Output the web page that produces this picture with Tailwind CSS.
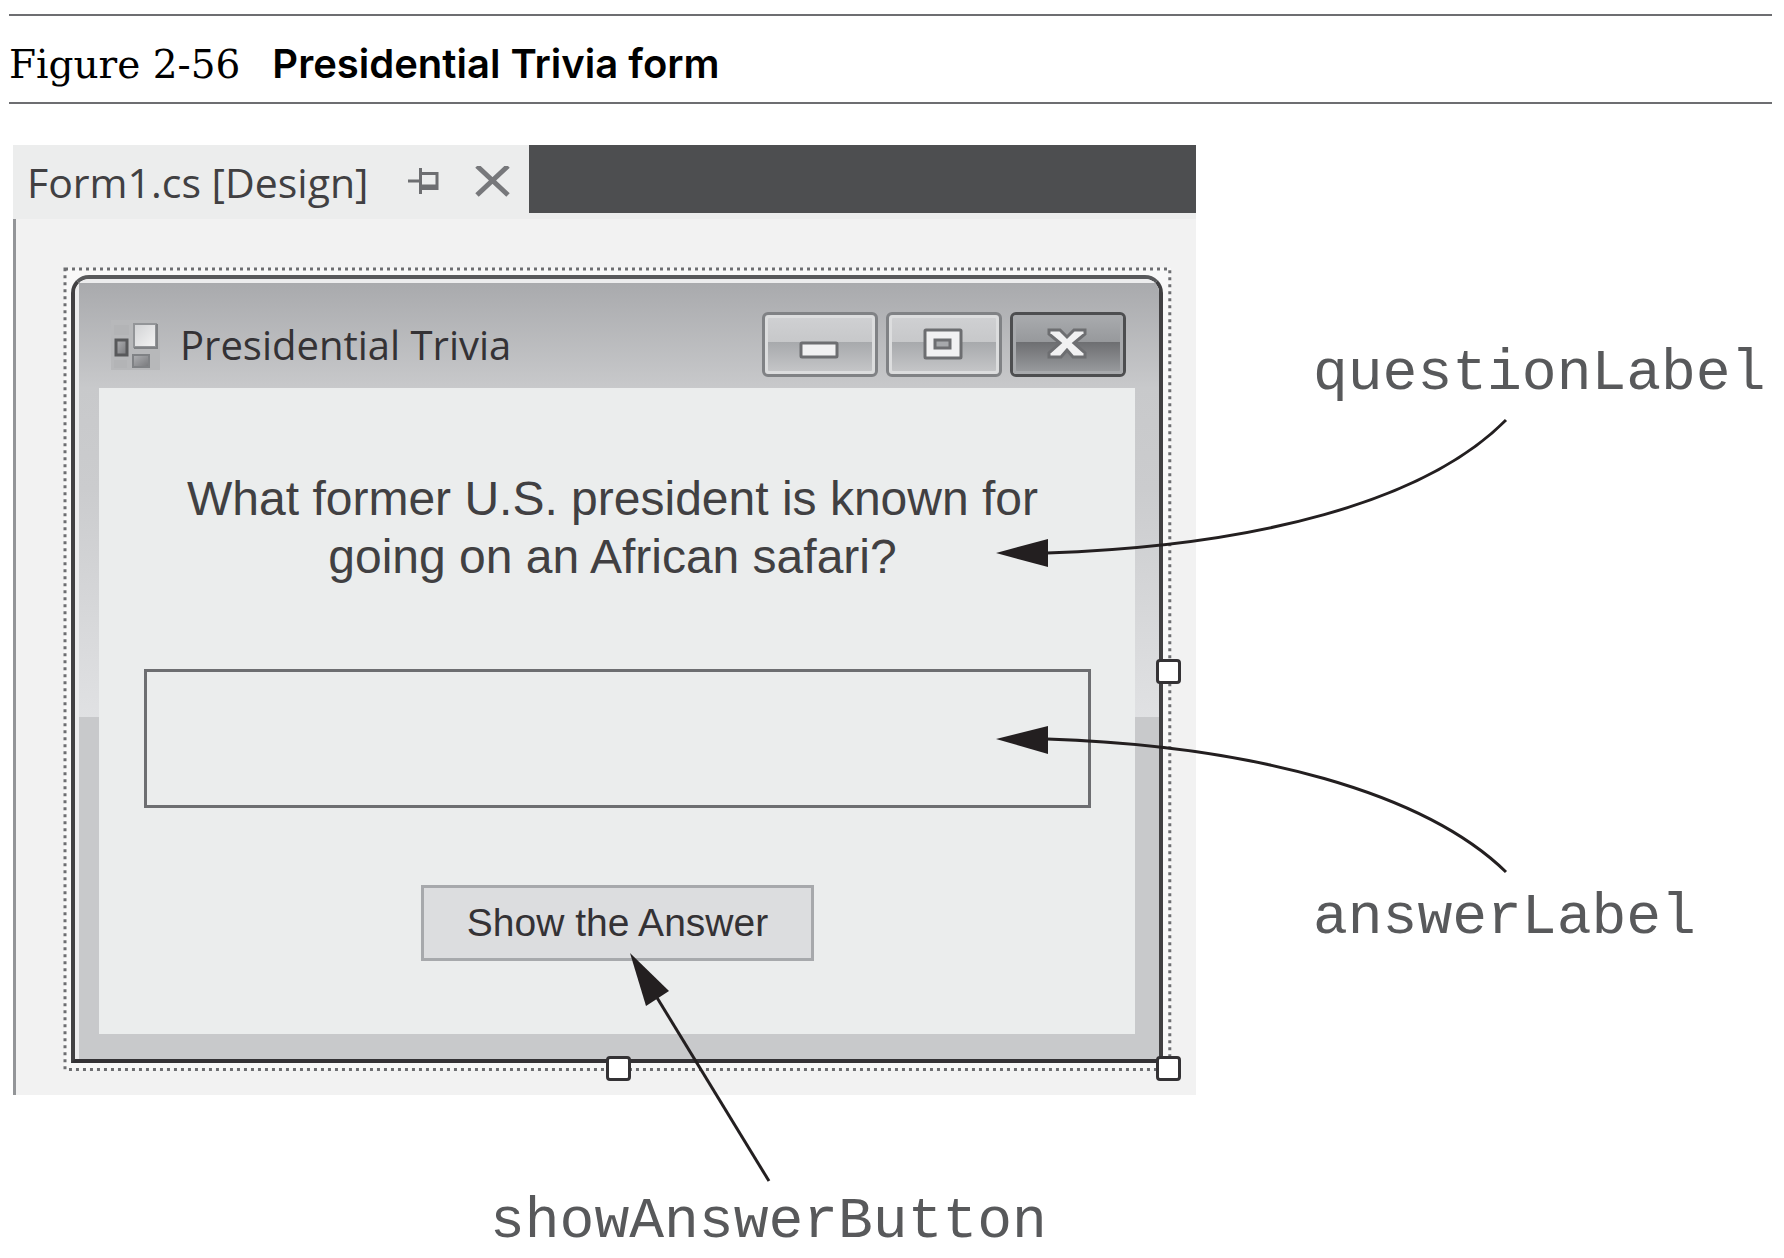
<!DOCTYPE html>
<html lang="en">
<head>
<meta charset="utf-8">
<title>Figure 2-56 Presidential Trivia form</title>
<script src="https://cdn.jsdelivr.net/npm/@tailwindcss/browser@4"></script>
</head>
<body class="bg-white text-[#231f20]">
<main class="pt-3.5 pl-[9px] pr-3">
  <header class="flex items-baseline gap-8 border-y-2 border-[#6d6e71] pt-5 pb-[9px] text-black">
    <span class="font-['DejaVu_Serif',serif] text-[39px] leading-14">Figure 2-56</span>
    <h1 class="font-[Inter,sans-serif] text-[40px] leading-14 font-semibold">Presidential Trivia form</h1>
  </header>

  <section class="relative mt-[41px] ml-1 grid grid-cols-[1183fr_576fr]">
    <!-- Designer pane -->
    <div class="bg-[#f2f2f2]">
      <div class="flex bg-[#eceded]">
        <div class="flex h-[74px] w-[516px] items-center pl-3.5">
          <span class="font-['Open_Sans',sans-serif] text-[41px] leading-14 text-[#414042] whitespace-nowrap">Form1.cs [Design]</span>
          <button type="button" aria-label="Pin tab" class="ml-10">
            <svg width="31" height="28" viewBox="0 0 31 28" fill="none" stroke="#6d6e71" stroke-width="3"><path d="M0 13H12M12.500 0V26M12 5.500H29V20.500H12M12 18H29"/></svg>
          </button>
          <button type="button" aria-label="Close tab" class="ml-9">
            <svg width="35" height="32" viewBox="0 0 35 32" fill="none" stroke="#77787b" stroke-width="5"><path d="M2 0L33 29M33 0L2 29"/></svg>
          </button>
        </div>
        <div class="h-[68px] grow bg-[#4d4e50]"></div>
      </div>

      <div class="border-l-3 border-[#939598] pt-[49px] pr-[25px] pb-[25px] pl-12">
        <!-- Selected form with dotted outline and sizing handles -->
        <div class="relative bg-[#f8f8f8] p-[7px] pr-2">
          <svg class="absolute inset-0 size-full overflow-visible" fill="none" stroke="#6d6e71" stroke-width="3" stroke-dasharray="3 4" aria-hidden="true">
            <rect x="1" y="1" width="99.800%" height="99.800%"/>
          </svg>
          <div class="relative overflow-hidden rounded-t-[18px] border-4 border-t-[#58595b] border-x-[#414042] border-b-[#343235]">
            <div class="rounded-tl-[14px] border-t-4 border-l-4 border-[#ececed] bg-[#c8c9cb]">
              <div class="flex h-[105px] items-center bg-linear-to-b from-[#a9aaad] to-[#c8c9cb] pt-[18px] pr-[33px] pl-8">
                <svg width="49" height="50" viewBox="0 0 49 50" aria-hidden="true">
                  <defs>
                    <linearGradient id="light" x2="1" y2="1"><stop stop-color="#d1d2d4"/><stop offset="1" stop-color="#f4f4f4"/></linearGradient>
                    <linearGradient id="dark" x2="1" y2="1"><stop stop-color="#b0b1b4"/><stop offset="1" stop-color="#77787b"/></linearGradient>
                  </defs>
                  <rect width="49" height="50" fill="#b7b8ba"/>
                  <path d="M3 5H18V15H3ZM3 40H16V48H3Z" fill="#b3b4b6"/>
                  <rect x="23" y="4" width="22" height="23" fill="url(#light)" stroke="#939598" stroke-width="2"/>
                  <path d="M23 28H46V4" fill="none" stroke="#808285" stroke-width="2"/>
                  <rect x="5" y="20" width="11" height="15" fill="url(#dark)" stroke="#58595b" stroke-width="3"/>
                  <rect x="22" y="35" width="16" height="12" fill="url(#dark)" stroke="#808285" stroke-width="2"/>
                </svg>
                <span class="ml-5 grow font-['Open_Sans',sans-serif] text-[40px] leading-14 text-[#343235] whitespace-nowrap">Presidential Trivia</span>
                <div class="flex gap-2">
                  <button type="button" aria-label="Minimize" class="flex h-[65px] w-[116px] items-center justify-center rounded-md border-3 border-[#808285]">
                    <span class="flex size-full items-center justify-center rounded-sm border-3 border-[#dcddde] bg-[linear-gradient(to_bottom,#cfd0d2_0%,#c7c8ca_45%,#a7a9ac_45%,#c4c5c7_100%)]">
                      <svg width="42" height="34" viewBox="0 0 42 34"><rect x="2" y="15" width="36" height="14" rx="1" fill="#f1f1f2" stroke="#6d6e71" stroke-width="3"/></svg>
                    </span>
                  </button>
                  <button type="button" aria-label="Maximize" class="flex h-[65px] w-[116px] items-center justify-center rounded-md border-3 border-[#808285]">
                    <span class="flex size-full items-center justify-center rounded-sm border-3 border-[#dcddde] bg-[linear-gradient(to_bottom,#cfd0d2_0%,#c7c8ca_45%,#a7a9ac_45%,#c4c5c7_100%)]">
                      <svg width="42" height="34" viewBox="0 0 42 34" stroke="#6d6e71" stroke-width="3"><rect x="2" y="2" width="36" height="28" rx="1" fill="#f1f1f2"/><rect x="12" y="12" width="15" height="8" fill="#a7a9ac"/></svg>
                    </span>
                  </button>
                  <button type="button" aria-label="Close" class="flex h-[65px] w-[116px] items-center justify-center rounded-md border-3 border-[#4d4e50]">
                    <span class="flex size-full items-center justify-center rounded-sm border-3 border-[#a7a9ac] bg-[linear-gradient(to_bottom,#a7a9ac_0%,#97999c_45%,#6d6e71_45%,#97999c_100%)]">
                      <svg width="42" height="34" viewBox="0 0 42 34"><path d="M2 2H13L20 9L27 2H38V6L27 15L38 25V29H26L20 22L14 29H2V25L13 15L2 6Z" fill="#f1f1f2" stroke="#6d6e71" stroke-width="3"/></svg>
                    </span>
                  </button>
                </div>
              </div>
              <div class="bg-[linear-gradient(to_bottom,#c8c9cb_0%,#cbccce_15%,#e0e1e3_49%,#c8c9cb_49%)] pr-6 pb-[25px] pl-5">
                <form class="flex flex-col items-center bg-[#ebeded] pt-[82px] pr-11 pb-[73px] pl-[45px]">
                  <p class="pr-2.5 text-center font-['Liberation_Sans',sans-serif] text-[48px] leading-[58px] text-[#414042]">What former U.S. president is known for<br>going on an African safari?</p>
                  <output aria-label="Answer" class="mt-[83px] block h-[139px] w-full border-3 border-[#6d6e71]"></output>
                  <button type="button" class="mt-[77px] h-[76px] w-[393px] border-3 border-[#a7a9ac] bg-[#dcdddf] font-['Liberation_Sans',sans-serif] text-[39px] text-[#343235]">Show the Answer</button>
                </form>
              </div>
            </div>
          </div>
          <div class="absolute -right-2.5 top-[391px] size-[25px] rounded-sm border-3 border-[#343235] bg-white"></div>
          <div class="absolute -right-2.5 -bottom-[11px] size-[25px] rounded-sm border-3 border-[#343235] bg-white"></div>
          <div class="absolute left-1/2 -bottom-[11px] -ml-3 size-[25px] rounded-sm border-3 border-[#343235] bg-white"></div>
        </div>
      </div>
    </div>

    <!-- Names of the controls on the right -->
    <div class="flex flex-col gap-[480px] pt-[197px] pl-[117px] font-['Liberation_Mono',monospace] text-[58px] leading-16 text-[#58595b]">
      <span>questionLabel</span>
      <span>answerLabel</span>
    </div>
    <div class="col-span-2 mt-[95px] pl-[477px] font-['Liberation_Mono',monospace] text-[58px] leading-16 text-[#58595b]">showAnswerButton</div>

    <!-- Callout arrows -->
    <svg class="pointer-events-none absolute inset-0 size-full" viewBox="0 0 1759 1109" preserveAspectRatio="none" aria-hidden="true">
      <g fill="none" stroke="#231f20" stroke-width="3">
        <path d="M1493 275C1412 357 1242 401 1034 408"/>
        <path d="M1493 727C1412 648 1242 601 1034 594"/>
        <path d="M756 1036L643 851"/>
      </g>
      <g fill="#231f20">
        <path d="M983 408L1035 394V422Z"/>
        <path d="M983 594L1035 581V609Z"/>
        <path d="M617 808L656 846L633 861Z"/>
      </g>
    </svg>
  </section>
</main>
</body>
</html>
